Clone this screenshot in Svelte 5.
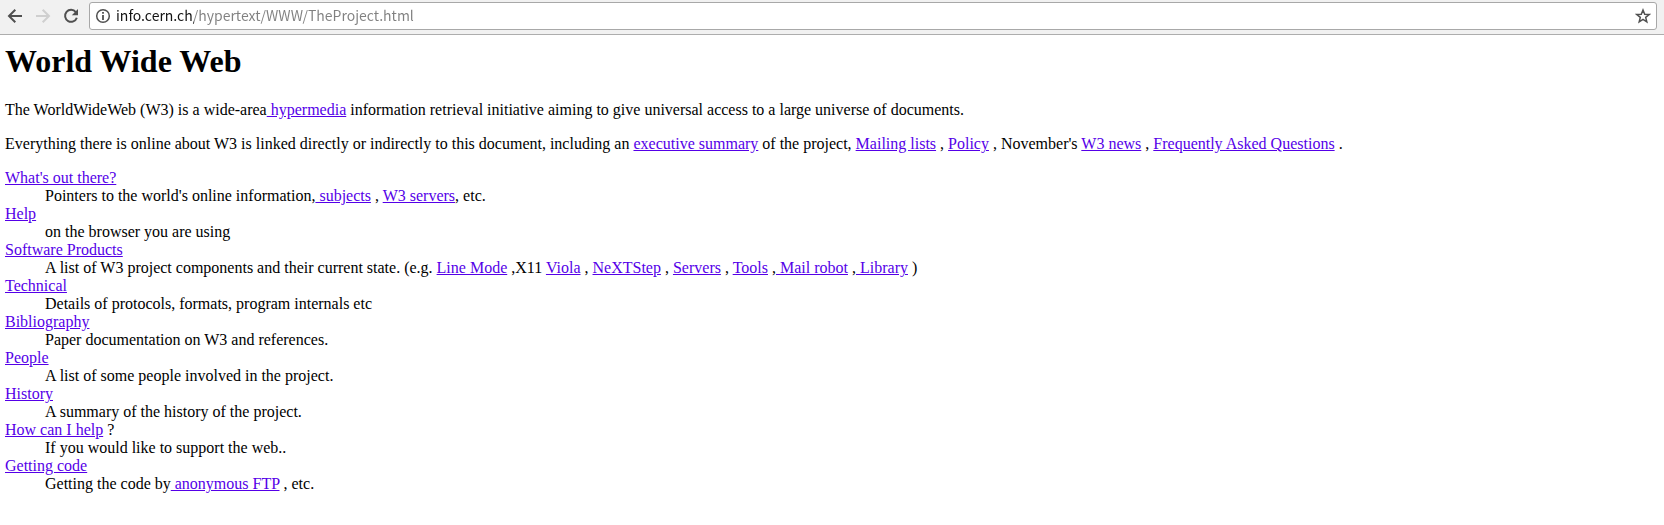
<script lang="ts">
  type Part = string | { link: string };
  type Entry = { term: Part[]; detail: Part[] };

  let address = $state('info.cern.ch/hypertext/WWW/TheProject.html');

  const intro: Part[][] = [
    [
      'The WorldWideWeb (W3) is a wide-area',
      { link: ' hypermedia' },
      ' information retrieval initiative aiming to give universal access to a large universe of documents.'
    ],
    [
      'Everything there is online about W3 is linked directly or indirectly to this document, including an ',
      { link: 'executive summary' },
      ' of the project, ',
      { link: 'Mailing lists' },
      ' , ',
      { link: 'Policy' },
      " , November's ",
      { link: 'W3 news' },
      ' , ',
      { link: 'Frequently Asked Questions' },
      ' .'
    ]
  ];

  const entries: Entry[] = [
    {
      term: [{ link: "What's out there?" }],
      detail: [
        "Pointers to the world's online information,",
        { link: ' subjects' },
        ' , ',
        { link: 'W3 servers' },
        ', etc.'
      ]
    },
    { term: [{ link: 'Help' }], detail: ['on the browser you are using'] },
    {
      term: [{ link: 'Software Products' }],
      detail: [
        'A list of W3 project components and their current state. (e.g. ',
        { link: 'Line Mode' },
        ' ,X11 ',
        { link: 'Viola' },
        ' , ',
        { link: 'NeXTStep' },
        ' , ',
        { link: 'Servers' },
        ' , ',
        { link: 'Tools' },
        ' ,',
        { link: ' Mail robot' },
        ' ,',
        { link: ' Library' },
        ' )'
      ]
    },
    { term: [{ link: 'Technical' }], detail: ['Details of protocols, formats, program internals etc'] },
    { term: [{ link: 'Bibliography' }], detail: ['Paper documentation on W3 and references.'] },
    { term: [{ link: 'People' }], detail: ['A list of some people involved in the project.'] },
    { term: [{ link: 'History' }], detail: ['A summary of the history of the project.'] },
    { term: [{ link: 'How can I help' }, ' ?'], detail: ['If you would like to support the web..'] },
    {
      term: [{ link: 'Getting code' }],
      detail: ['Getting the code by', { link: ' anonymous FTP' }, ' , etc.']
    }
  ];
</script>

{#snippet rich(parts: Part[])}
  {#each parts as part}{#if typeof part === 'string'}{part}{:else}<a href="#top">{part.link}</a>{/if}{/each}
{/snippet}

<div class="toolbar">
  <button class="nav" aria-label="Back">
    <svg viewBox="0 0 16 16"><path d="M15 8H2.5M8.300 1.700L2 8l6.300 6.300" /></svg>
  </button>
  <button class="nav" aria-label="Forward" disabled>
    <svg viewBox="0 0 16 16"><path d="M1 8h12.500M7.700 1.700L14 8l-6.300 6.300" /></svg>
  </button>
  <button class="nav" aria-label="Reload">
    <svg viewBox="0 0 16 16">
      <path d="M12.800 4.100A6 6 0 1 0 13.800 9.700" />
      <path class="solid" d="M15 1v6.200H8.800z" />
    </svg>
  </button>
  <div class="field">
    <button class="icon" aria-label="View site information">
      <svg viewBox="0 0 16 16">
        <circle class="ring" cx="8" cy="8" r="6.300" />
        <path class="solid" d="M7.100 7h1.800v5H7.100zM7.100 4h1.800v1.800H7.100z" />
      </svg>
    </button>
    <input type="text" aria-label="Address" spellcheck="false" bind:value={address} />
    <button class="icon" aria-label="Bookmark this page">
      <svg viewBox="0 0 16 16">
        <path class="star" d="M8 2l1.700 4.200 4.500.3-3.500 2.900 1.100 4.400L8 11.400l-3.800 2.400 1.100-4.400-3.500-2.900 4.500-.3z" />
      </svg>
    </button>
  </div>
</div>

<main id="top">
  <h1>World Wide Web</h1>
  {#each intro as paragraph}
    <p>{@render rich(paragraph)}</p>
  {/each}
  <dl>
    {#each entries as entry}
      <dt>{@render rich(entry.term)}</dt>
      <dd>{@render rich(entry.detail)}</dd>
    {/each}
  </dl>
</main>

<style>
  :global(body) {
    margin: 0;
    background: #fff;
  }

  .toolbar {
    display: flex;
    align-items: center;
    padding: 2px 7px 4px 1px;
    background: #f1f1f1;
    border-bottom: 1px solid #adadad;
  }

  button {
    display: flex;
    align-items: center;
    justify-content: center;
    flex: none;
    padding: 0;
    border: 0;
    background: none;
    color: #505050;
  }

  .nav {
    width: 28px;
    height: 28px;
  }

  .nav:disabled {
    color: #cfcfcf;
  }

  .icon {
    width: 16px;
    height: 16px;
  }

  svg {
    width: 16px;
    height: 16px;
    fill: none;
    stroke: currentColor;
    stroke-width: 2;
  }

  .solid {
    fill: currentColor;
    stroke: none;
  }

  .ring,
  .star {
    stroke-width: 1.5;
  }

  .field {
    display: flex;
    flex: 1;
    align-items: center;
    gap: 5px;
    min-width: 0;
    height: 26px;
    margin-left: 4px;
    padding: 0 5px;
    border: 1px solid #a8a8a8;
    border-radius: 3px;
    background: #fff;
  }

  /* The host name is darker than the path that follows it. */
  input {
    flex: 1;
    align-self: flex-start;
    min-width: 0;
    height: 24px;
    padding: 0;
    border: 0;
    outline: 0;
    color: #111;
    background: linear-gradient(to right, #111 78px, #808080 78px);
    background-clip: text;
    -webkit-text-fill-color: transparent;
    font: 14px/24px 'Noto Sans CJK SC', sans-serif;
  }

  main {
    padding: 8px 5px;
    color: #000;
    font-family: 'Liberation Serif', serif;
    font-size: 16px;
    line-height: 18px;
  }

  h1 {
    margin: 0 0 21px;
    font-size: 32px;
    line-height: 37px;
  }

  p,
  dl {
    margin: 0 0 16px;
  }

  dd {
    margin: 0 0 0 40px;
  }

  a {
    color: #5500e8;
    text-decoration: underline;
  }
</style>
